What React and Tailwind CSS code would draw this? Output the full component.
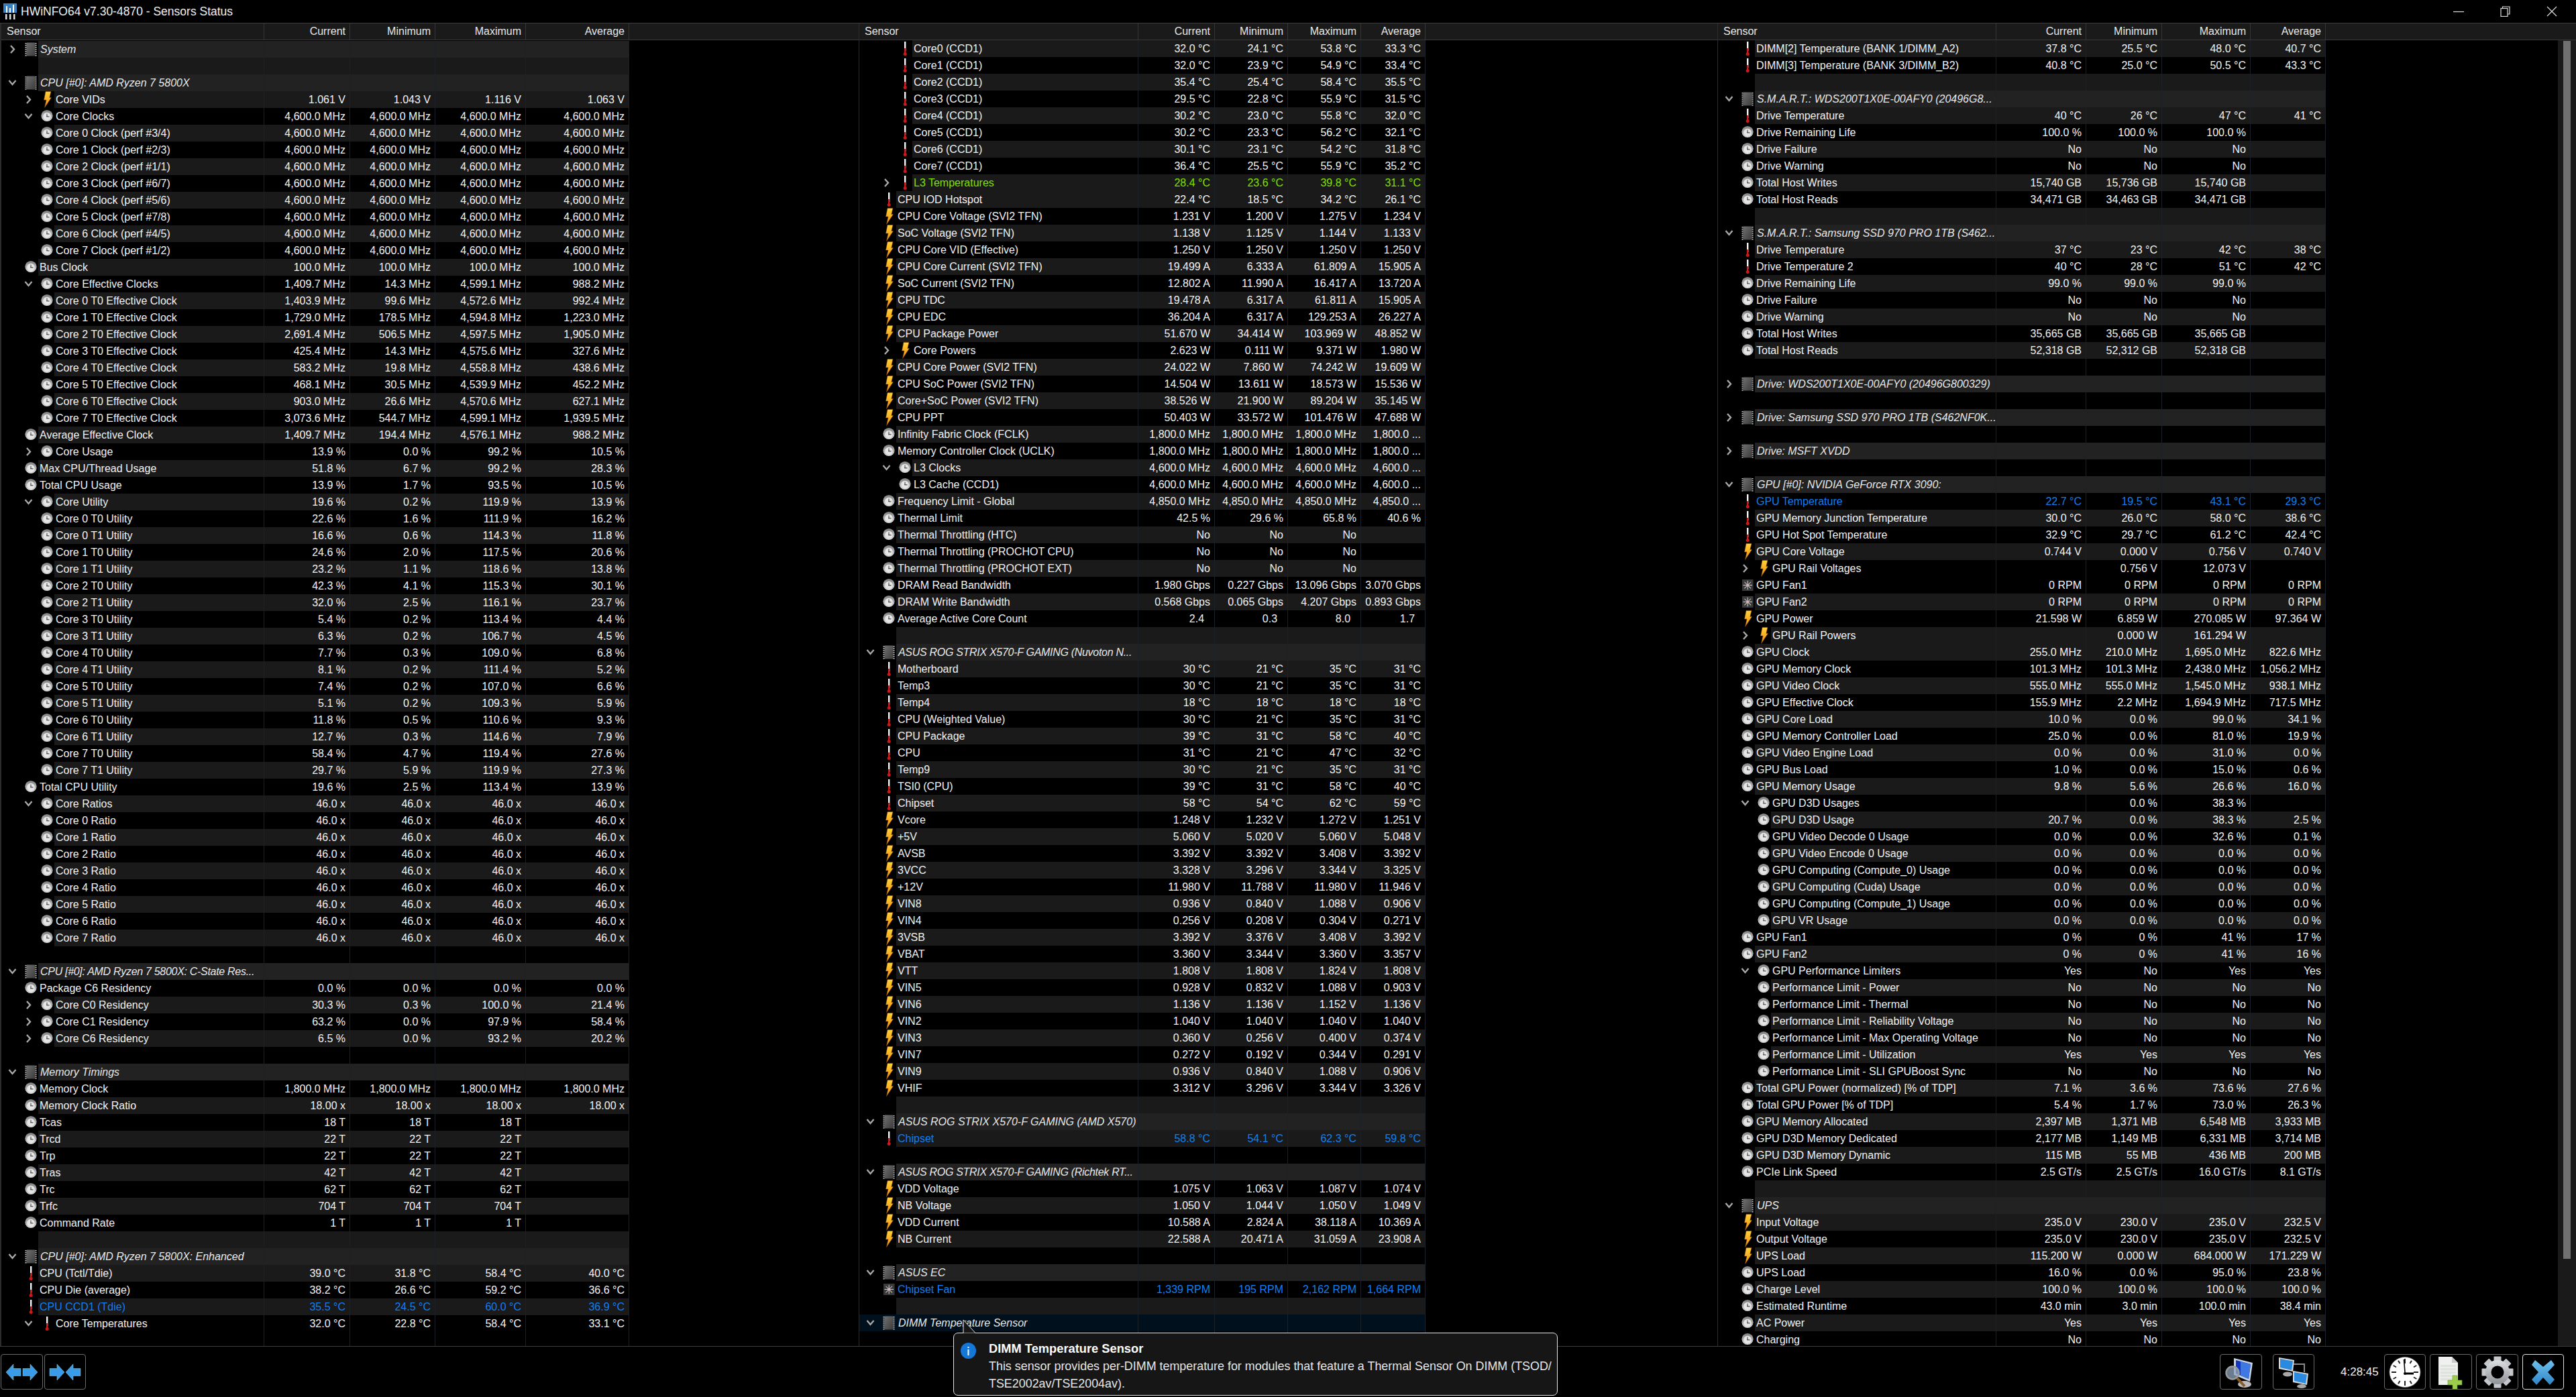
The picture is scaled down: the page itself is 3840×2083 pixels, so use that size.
import React from 'react';

const u = (unit, ...vals) => vals.map((v) => (v === '' ? '' : `${v} ${unit}`));
const BLUE = 'text-[#0f7ff2]';
const GREEN = 'text-[#7fe000]';

const S = (name, chev = 'd', opts = {}) => ({ kind: 'section', name, chev, ...opts });
const B = () => ({ kind: 'blank' });
const R = (icon, lvl, name, vals, opts = {}) => ({ kind: 'row', icon, lvl, name, vals, ...opts });
const all = (v) => [v, v, v, v];
const tri = (v) => [v, v, v, ''];

const coreClockNames = ['#3/4', '#2/3', '#1/1', '#6/7', '#5/6', '#7/8', '#4/5', '#1/2'];
const eff = [
  ['1,403.9', '99.6', '4,572.6', '992.4'],
  ['1,729.0', '178.5', '4,594.8', '1,223.0'],
  ['2,691.4', '506.5', '4,597.5', '1,905.0'],
  ['425.4', '14.3', '4,575.6', '327.6'],
  ['583.2', '19.8', '4,558.8', '438.6'],
  ['468.1', '30.5', '4,539.9', '452.2'],
  ['903.0', '26.6', '4,570.6', '627.1'],
  ['3,073.6', '544.7', '4,599.1', '1,939.5'],
];
const util = [
  ['22.6', '1.6', '111.9', '16.2'], ['16.6', '0.6', '114.3', '11.8'],
  ['24.6', '2.0', '117.5', '20.6'], ['23.2', '1.1', '118.6', '13.8'],
  ['42.3', '4.1', '115.3', '30.1'], ['32.0', '2.5', '116.1', '23.7'],
  ['5.4', '0.2', '113.4', '4.4'], ['6.3', '0.2', '106.7', '4.5'],
  ['7.7', '0.3', '109.0', '6.8'], ['8.1', '0.2', '111.4', '5.2'],
  ['7.4', '0.2', '107.0', '6.6'], ['5.1', '0.2', '109.3', '5.9'],
  ['11.8', '0.5', '110.6', '9.3'], ['12.7', '0.3', '114.6', '7.9'],
  ['58.4', '4.7', '119.4', '27.6'], ['29.7', '5.9', '119.9', '27.3'],
];

const panel1 = [
  S('System', 'r'),
  B(),
  S('CPU [#0]: AMD Ryzen 7 5800X'),
  R('bolt', 1, 'Core VIDs', u('V', '1.061', '1.043', '1.116', '1.063'), { chev: 'r' }),
  R('clock', 1, 'Core Clocks', u('MHz', ...all('4,600.0')), { chev: 'd' }),
  ...coreClockNames.map((p, i) => R('clock', 1, `Core ${i} Clock (perf ${p})`, u('MHz', ...all('4,600.0')))),
  R('clock', 0, 'Bus Clock', u('MHz', ...all('100.0'))),
  R('clock', 1, 'Core Effective Clocks', u('MHz', '1,409.7', '14.3', '4,599.1', '988.2'), { chev: 'd' }),
  ...eff.map((v, i) => R('clock', 1, `Core ${i} T0 Effective Clock`, u('MHz', ...v))),
  R('clock', 0, 'Average Effective Clock', u('MHz', '1,409.7', '194.4', '4,576.1', '988.2')),
  R('clock', 1, 'Core Usage', u('%', '13.9', '0.0', '99.2', '10.5'), { chev: 'r' }),
  R('clock', 0, 'Max CPU/Thread Usage', u('%', '51.8', '6.7', '99.2', '28.3')),
  R('clock', 0, 'Total CPU Usage', u('%', '13.9', '1.7', '93.5', '10.5')),
  R('clock', 1, 'Core Utility', u('%', '19.6', '0.2', '119.9', '13.9'), { chev: 'd' }),
  ...util.map((v, i) => R('clock', 1, `Core ${Math.floor(i / 2)} T${i % 2} Utility`, u('%', ...v))),
  R('clock', 0, 'Total CPU Utility', u('%', '19.6', '2.5', '113.4', '13.9')),
  R('clock', 1, 'Core Ratios', u('x', ...all('46.0')), { chev: 'd' }),
  ...[0, 1, 2, 3, 4, 5, 6, 7].map((i) => R('clock', 1, `Core ${i} Ratio`, u('x', ...all('46.0')))),
  B(),
  S('CPU [#0]: AMD Ryzen 7 5800X: C-State Res...', 'd', { tight: true }),
  R('clock', 0, 'Package C6 Residency', u('%', ...all('0.0'))),
  R('clock', 1, 'Core C0 Residency', u('%', '30.3', '0.3', '100.0', '21.4'), { chev: 'r' }),
  R('clock', 1, 'Core C1 Residency', u('%', '63.2', '0.0', '97.9', '58.4'), { chev: 'r' }),
  R('clock', 1, 'Core C6 Residency', u('%', '6.5', '0.0', '93.2', '20.2'), { chev: 'r' }),
  B(),
  S('Memory Timings'),
  R('clock', 0, 'Memory Clock', u('MHz', ...all('1,800.0'))),
  R('clock', 0, 'Memory Clock Ratio', u('x', ...all('18.00'))),
  R('clock', 0, 'Tcas', u('T', ...tri('18'))),
  R('clock', 0, 'Trcd', u('T', ...tri('22'))),
  R('clock', 0, 'Trp', u('T', ...tri('22'))),
  R('clock', 0, 'Tras', u('T', ...tri('42'))),
  R('clock', 0, 'Trc', u('T', ...tri('62'))),
  R('clock', 0, 'Trfc', u('T', ...tri('704'))),
  R('clock', 0, 'Command Rate', u('T', ...tri('1'))),
  B(),
  S('CPU [#0]: AMD Ryzen 7 5800X: Enhanced'),
  R('therm', 0, 'CPU (Tctl/Tdie)', u('°C', '39.0', '31.8', '58.4', '40.0')),
  R('therm', 0, 'CPU Die (average)', u('°C', '38.2', '26.6', '59.2', '36.6')),
  R('therm', 0, 'CPU CCD1 (Tdie)', u('°C', '35.5', '24.5', '60.0', '36.9'), { color: BLUE }),
  R('therm', 1, 'Core Temperatures', u('°C', '32.0', '22.8', '58.4', '33.1'), { chev: 'd' }),
];

const coreTemps = [
  ['32.0', '24.1', '53.8', '33.3'], ['32.0', '23.9', '54.9', '33.4'],
  ['35.4', '25.4', '58.4', '35.5'], ['29.5', '22.8', '55.9', '31.5'],
  ['30.2', '23.0', '55.8', '32.0'], ['30.2', '23.3', '56.2', '32.1'],
  ['30.1', '23.1', '54.2', '31.8'], ['36.4', '25.5', '55.9', '35.2'],
];
const dots = (v) => [`${v} MHz`, `${v} MHz`, `${v} MHz`, `${v} ...`];
const therm0 = (name, ...v) => R('therm', 0, name, u('°C', ...v));
const bolt0 = (name, unit, ...v) => R('bolt', 0, name, u(unit, ...v));
const clock0 = (name, unit, ...v) => R('clock', 0, name, u(unit, ...v));

const panel2 = [
  ...coreTemps.map((v, i) => R('therm', 1, `Core${i} (CCD1)`, u('°C', ...v))),
  R('therm', 1, 'L3 Temperatures', u('°C', '28.4', '23.6', '39.8', '31.1'), { chev: 'r', color: GREEN, flip: true }),
  therm0('CPU IOD Hotspot', '22.4', '18.5', '34.2', '26.1'),
  bolt0('CPU Core Voltage (SVI2 TFN)', 'V', '1.231', '1.200', '1.275', '1.234'),
  bolt0('SoC Voltage (SVI2 TFN)', 'V', '1.138', '1.125', '1.144', '1.133'),
  bolt0('CPU Core VID (Effective)', 'V', '1.250', '1.250', '1.250', '1.250'),
  bolt0('CPU Core Current (SVI2 TFN)', 'A', '19.499', '6.333', '61.809', '15.905'),
  bolt0('SoC Current (SVI2 TFN)', 'A', '12.802', '11.990', '16.417', '13.720'),
  bolt0('CPU TDC', 'A', '19.478', '6.317', '61.811', '15.905'),
  bolt0('CPU EDC', 'A', '36.204', '6.317', '129.253', '26.227'),
  bolt0('CPU Package Power', 'W', '51.670', '34.414', '103.969', '48.852'),
  R('bolt', 1, 'Core Powers', u('W', '2.623', '0.111', '9.371', '1.980'), { chev: 'r' }),
  bolt0('CPU Core Power (SVI2 TFN)', 'W', '24.022', '7.860', '74.242', '19.609'),
  bolt0('CPU SoC Power (SVI2 TFN)', 'W', '14.504', '13.611', '18.573', '15.536'),
  bolt0('Core+SoC Power (SVI2 TFN)', 'W', '38.526', '21.900', '89.204', '35.145'),
  bolt0('CPU PPT', 'W', '50.403', '33.572', '101.476', '47.688'),
  R('clock', 0, 'Infinity Fabric Clock (FCLK)', dots('1,800.0')),
  R('clock', 0, 'Memory Controller Clock (UCLK)', dots('1,800.0')),
  R('clock', 1, 'L3 Clocks', dots('4,600.0'), { chev: 'd' }),
  R('clock', 1, 'L3 Cache (CCD1)', dots('4,600.0')),
  R('clock', 0, 'Frequency Limit - Global', dots('4,850.0')),
  clock0('Thermal Limit', '%', '42.5', '29.6', '65.8', '40.6'),
  R('clock', 0, 'Thermal Throttling (HTC)', tri('No')),
  R('clock', 0, 'Thermal Throttling (PROCHOT CPU)', tri('No')),
  R('clock', 0, 'Thermal Throttling (PROCHOT EXT)', tri('No')),
  clock0('DRAM Read Bandwidth', 'Gbps', '1.980', '0.227', '13.096', '3.070'),
  clock0('DRAM Write Bandwidth', 'Gbps', '0.568', '0.065', '4.207', '0.893'),
  R('clock', 0, 'Average Active Core Count', ['2.4\u00a0\u00a0', '0.3\u00a0\u00a0', '8.0\u00a0\u00a0', '1.7\u00a0\u00a0']),
  B(),
  S('ASUS ROG STRIX X570-F GAMING (Nuvoton N...', 'd', { tight: true }),
  therm0('Motherboard', '30', '21', '35', '31'),
  therm0('Temp3', '30', '21', '35', '31'),
  therm0('Temp4', '18', '18', '18', '18'),
  therm0('CPU (Weighted Value)', '30', '21', '35', '31'),
  therm0('CPU Package', '39', '31', '58', '40'),
  therm0('CPU', '31', '21', '47', '32'),
  therm0('Temp9', '30', '21', '35', '31'),
  therm0('TSI0 (CPU)', '39', '31', '58', '40'),
  therm0('Chipset', '58', '54', '62', '59'),
  bolt0('Vcore', 'V', '1.248', '1.232', '1.272', '1.251'),
  bolt0('+5V', 'V', '5.060', '5.020', '5.060', '5.048'),
  bolt0('AVSB', 'V', '3.392', '3.392', '3.408', '3.392'),
  bolt0('3VCC', 'V', '3.328', '3.296', '3.344', '3.325'),
  bolt0('+12V', 'V', '11.980', '11.788', '11.980', '11.946'),
  bolt0('VIN8', 'V', '0.936', '0.840', '1.088', '0.906'),
  bolt0('VIN4', 'V', '0.256', '0.208', '0.304', '0.271'),
  bolt0('3VSB', 'V', '3.392', '3.376', '3.408', '3.392'),
  bolt0('VBAT', 'V', '3.360', '3.344', '3.360', '3.357'),
  bolt0('VTT', 'V', '1.808', '1.808', '1.824', '1.808'),
  bolt0('VIN5', 'V', '0.928', '0.832', '1.088', '0.903'),
  bolt0('VIN6', 'V', '1.136', '1.136', '1.152', '1.136'),
  bolt0('VIN2', 'V', '1.040', '1.040', '1.040', '1.040'),
  bolt0('VIN3', 'V', '0.360', '0.256', '0.400', '0.374'),
  bolt0('VIN7', 'V', '0.272', '0.192', '0.344', '0.291'),
  bolt0('VIN9', 'V', '0.936', '0.840', '1.088', '0.906'),
  bolt0('VHIF', 'V', '3.312', '3.296', '3.344', '3.326'),
  B(),
  S('ASUS ROG STRIX X570-F GAMING (AMD X570)'),
  R('therm', 0, 'Chipset', u('°C', '58.8', '54.1', '62.3', '59.8'), { color: BLUE }),
  B(),
  S('ASUS ROG STRIX X570-F GAMING (Richtek RT...', 'd', { tight: true }),
  bolt0('VDD Voltage', 'V', '1.075', '1.063', '1.087', '1.074'),
  bolt0('NB Voltage', 'V', '1.050', '1.044', '1.050', '1.049'),
  bolt0('VDD Current', 'A', '10.588', '2.824', '38.118', '10.369'),
  bolt0('NB Current', 'A', '22.588', '20.471', '31.059', '23.908'),
  B(),
  S('ASUS EC'),
  R('fan', 0, 'Chipset Fan', u('RPM', '1,339', '195', '2,162', '1,664'), { color: BLUE }),
  B(),
  S('DIMM Temperature Sensor', 'd', { selected: true }),
];

const d3d = ['GPU Video Decode 0 Usage', 'GPU Video Encode 0 Usage', 'GPU Computing (Compute_0) Usage', 'GPU Computing (Cuda) Usage', 'GPU Computing (Compute_1) Usage', 'GPU VR Usage'];
const clock1 = (name, unit, ...v) => R('clock', 1, name, u(unit, ...v));

const panel3 = [
  therm0('DIMM[2] Temperature (BANK 1/DIMM_A2)', '37.8', '25.5', '48.0', '40.7'),
  therm0('DIMM[3] Temperature (BANK 3/DIMM_B2)', '40.8', '25.0', '50.5', '43.3'),
  B(),
  S('S.M.A.R.T.: WDS200T1X0E-00AFY0 (20496G8...'),
  therm0('Drive Temperature', '40', '26', '47', '41'),
  R('clock', 0, 'Drive Remaining Life', u('%', ...tri('100.0'))),
  R('clock', 0, 'Drive Failure', tri('No')),
  R('clock', 0, 'Drive Warning', tri('No')),
  R('clock', 0, 'Total Host Writes', u('GB', '15,740', '15,736', '15,740', '')),
  R('clock', 0, 'Total Host Reads', u('GB', '34,471', '34,463', '34,471', '')),
  B(),
  S('S.M.A.R.T.: Samsung SSD 970 PRO 1TB (S462...'),
  therm0('Drive Temperature', '37', '23', '42', '38'),
  therm0('Drive Temperature 2', '40', '28', '51', '42'),
  R('clock', 0, 'Drive Remaining Life', u('%', ...tri('99.0'))),
  R('clock', 0, 'Drive Failure', tri('No')),
  R('clock', 0, 'Drive Warning', tri('No')),
  R('clock', 0, 'Total Host Writes', u('GB', ...tri('35,665'))),
  R('clock', 0, 'Total Host Reads', u('GB', '52,318', '52,312', '52,318', '')),
  B(),
  S('Drive: WDS200T1X0E-00AFY0 (20496G800329)', 'r'),
  B(),
  S('Drive: Samsung SSD 970 PRO 1TB (S462NF0K...', 'r'),
  B(),
  S('Drive: MSFT XVDD', 'r'),
  B(),
  S('GPU [#0]: NVIDIA GeForce RTX 3090:'),
  R('therm', 0, 'GPU Temperature', u('°C', '22.7', '19.5', '43.1', '29.3'), { color: BLUE }),
  therm0('GPU Memory Junction Temperature', '30.0', '26.0', '58.0', '38.6'),
  therm0('GPU Hot Spot Temperature', '32.9', '29.7', '61.2', '42.4'),
  bolt0('GPU Core Voltage', 'V', '0.744', '0.000', '0.756', '0.740'),
  R('bolt', 1, 'GPU Rail Voltages', u('V', '', '0.756', '12.073', ''), { chev: 'r', flip: true }),
  R('fan', 0, 'GPU Fan1', u('RPM', ...all('0'))),
  R('fan', 0, 'GPU Fan2', u('RPM', ...all('0'))),
  bolt0('GPU Power', 'W', '21.598', '6.859', '270.085', '97.364'),
  R('bolt', 1, 'GPU Rail Powers', u('W', '', '0.000', '161.294', ''), { chev: 'r', flip: true }),
  clock0('GPU Clock', 'MHz', '255.0', '210.0', '1,695.0', '822.6'),
  clock0('GPU Memory Clock', 'MHz', '101.3', '101.3', '2,438.0', '1,056.2'),
  clock0('GPU Video Clock', 'MHz', '555.0', '555.0', '1,545.0', '938.1'),
  clock0('GPU Effective Clock', 'MHz', '155.9', '2.2', '1,694.9', '717.5'),
  clock0('GPU Core Load', '%', '10.0', '0.0', '99.0', '34.1'),
  clock0('GPU Memory Controller Load', '%', '25.0', '0.0', '81.0', '19.9'),
  clock0('GPU Video Engine Load', '%', '0.0', '0.0', '31.0', '0.0'),
  clock0('GPU Bus Load', '%', '1.0', '0.0', '15.0', '0.6'),
  clock0('GPU Memory Usage', '%', '9.8', '5.6', '26.6', '16.0'),
  R('clock', 1, 'GPU D3D Usages', u('%', '', '0.0', '38.3', ''), { chev: 'd' }),
  clock1('GPU D3D Usage', '%', '20.7', '0.0', '38.3', '2.5'),
  ...d3d.map((n, i) => clock1(n, '%', '0.0', '0.0', i === 0 ? '32.6' : '0.0', i === 0 ? '0.1' : '0.0')),
  clock0('GPU Fan1', '%', '0', '0', '41', '17'),
  clock0('GPU Fan2', '%', '0', '0', '41', '16'),
  R('clock', 1, 'GPU Performance Limiters', ['Yes', 'No', 'Yes', 'Yes'], { chev: 'd' }),
  R('clock', 1, 'Performance Limit - Power', all('No')),
  R('clock', 1, 'Performance Limit - Thermal', all('No')),
  R('clock', 1, 'Performance Limit - Reliability Voltage', all('No')),
  R('clock', 1, 'Performance Limit - Max Operating Voltage', all('No')),
  R('clock', 1, 'Performance Limit - Utilization', all('Yes')),
  R('clock', 1, 'Performance Limit - SLI GPUBoost Sync', all('No')),
  clock0('Total GPU Power (normalized) [% of TDP]', '%', '7.1', '3.6', '73.6', '27.6'),
  clock0('Total GPU Power [% of TDP]', '%', '5.4', '1.7', '73.0', '26.3'),
  clock0('GPU Memory Allocated', 'MB', '2,397', '1,371', '6,548', '3,933'),
  clock0('GPU D3D Memory Dedicated', 'MB', '2,177', '1,149', '6,331', '3,714'),
  clock0('GPU D3D Memory Dynamic', 'MB', '115', '55', '436', '200'),
  clock0('PCIe Link Speed', 'GT/s', '2.5', '2.5', '16.0', '8.1'),
  B(),
  S('UPS'),
  bolt0('Input Voltage', 'V', '235.0', '230.0', '235.0', '232.5'),
  bolt0('Output Voltage', 'V', '235.0', '230.0', '235.0', '232.5'),
  bolt0('UPS Load', 'W', '115.200', '0.000', '684.000', '171.229'),
  clock0('UPS Load', '%', '16.0', '0.0', '95.0', '23.8'),
  clock0('Charge Level', '%', '100.0', '100.0', '100.0', '100.0'),
  clock0('Estimated Runtime', 'min', '43.0', '3.0', '100.0', '38.4'),
  R('clock', 0, 'AC Power', all('Yes')),
  R('clock', 0, 'Charging', all('No')),
];

/* ---------- small icons ---------- */
function Chevron({ dir }) {
  return dir === 'd' ? (
    <svg width="13" height="25" viewBox="0 0 13 25"><polyline points="1.5,9 6.5,15 11.5,9" fill="none" stroke="#a8a8a8" strokeWidth="2.4" /></svg>
  ) : (
    <svg width="9" height="25" viewBox="0 0 9 25"><polyline points="2,7 7,12.5 2,18" fill="none" stroke="#a8a8a8" strokeWidth="2.4" /></svg>
  );
}
function ClockIcon() {
  return (
    <svg width="18" height="25" viewBox="0 0 18 25">
      <circle cx="9" cy="11.5" r="8.6" fill="url(#rim)" />
      <circle cx="9" cy="12.5" r="5.8" fill="#e6e6e6" />
      <path d="M9 12.5 L9 8.5 M9 12.5 L12.5 13" stroke="#6a6a6a" strokeWidth="1.3" />
      <circle cx="9" cy="12.5" r="1" fill="#555" />
    </svg>
  );
}
function BoltIcon() {
  return (
    <svg width="18" height="25" viewBox="0 0 18 25">
      <path d="M7 0.5 L15 0.5 L12.8 9.5 L15.5 9.5 L5.5 24.5 L8 13 L4.5 13 Z" fill="url(#bolt)" stroke="#8a4b00" strokeWidth="0.5" />
    </svg>
  );
}
function ThermIcon() {
  return (
    <svg width="18" height="25" viewBox="0 0 18 25">
      <rect x="8" y="2" width="2.4" height="14" fill="#f4f4f4" />
      <rect x="8" y="12" width="2.4" height="9" fill="#c81e1e" />
      <circle cx="9.2" cy="20.5" r="2.5" fill="#d01818" />
    </svg>
  );
}
function FanIcon() {
  return (
    <svg width="18" height="25" viewBox="0 0 18 25">
      <rect x="1" y="4" width="16.5" height="17" fill="#3a3a3a" />
      {[0, 45, 90, 135].map((a) => (
        <rect key={a} x="2.5" y="12" width="13.5" height="1" fill="#cfcfcf" transform={`rotate(${a} 9.2 12.5)`} />
      ))}
      <circle cx="9.2" cy="12.5" r="2" fill="#d2b4b4" />
    </svg>
  );
}
function ChipIcon() {
  return (
    <svg width="18" height="25" viewBox="0 0 18 25">
      <rect x="2.5" y="2.5" width="13" height="20" rx="1" fill="url(#chip)" />
      {[3, 6, 9, 12, 15, 18, 21].map((y) => (
        <g key={y}>
          <rect x="0.5" y={y} width="2" height="1.6" fill="#bdbdbd" />
          <rect x="15.5" y={y} width="2" height="1.6" fill="#bdbdbd" />
        </g>
      ))}
    </svg>
  );
}
const ICONS = { clock: ClockIcon, bolt: BoltIcon, therm: ThermIcon, fan: FanIcon, chip: ChipIcon };

function Gutter({ lvl, chev, icon, selected }) {
  const Icon = ICONS[icon];
  const bg = selected ? 'bg-[#00101c]' : 'bg-black';
  if (lvl === 1) {
    return (
      <div className={`flex h-[25px] w-[79px] shrink-0 pl-[33px] ${bg}`}>
        <div className="flex w-[14px] shrink-0 justify-center">{chev && <Chevron dir={chev} />}</div>
        <div className="flex w-[32px] shrink-0 justify-end pr-[2px]">{Icon && <Icon />}</div>
      </div>
    );
  }
  return (
    <div className={`flex h-[25px] w-[55px] shrink-0 ${bg}`}>
      <div className="flex w-[33px] shrink-0 justify-center">{chev && <Chevron dir={chev} />}</div>
      <div className="flex w-[22px] shrink-0 justify-end pr-[2px]">{Icon && <Icon />}</div>
    </div>
  );
}

function Row({ row, stripe, grid }) {
  const line = 'border-r border-[#1b2029]';
  let bg = stripe ? 'bg-[#1a1a1a]' : 'bg-black';
  if (row.kind === 'section') bg = row.selected ? 'bg-[#00101c]' : 'bg-[#222222]';
  const color = row.color || 'text-[#f2f2f2]';
  const vals = row.vals || ['', '', '', ''];
  return (
    <div className={`grid h-[25px] shrink-0 ${grid}`}>
      <div className={`flex min-w-0 ${line}`}>
        {row.kind === 'section' ? (
          <Gutter lvl={0} chev={row.chev} icon="chip" selected={row.selected} />
        ) : row.kind === 'blank' ? (
          <Gutter lvl={0} />
        ) : (
          <Gutter lvl={row.lvl} chev={row.chev} icon={row.icon} />
        )}
        <div
          className={`min-w-0 flex-1 overflow-hidden whitespace-nowrap ${bg} ${
            row.kind === 'section' ? 'pl-[3px] italic text-[#e8e8e8]' : `pl-[2px] ${color}`
          } ${row.tight ? 'tracking-[-0.3px]' : ''}`}
        >
          {row.name}
        </div>
      </div>
      {vals.map((v, i) => (
        <div key={i} className={`overflow-hidden whitespace-nowrap pr-[6px] text-right ${bg} ${line} ${color}`}>
          {v}
        </div>
      ))}
    </div>
  );
}

function Panel({ rows, grid, first, start, scrollbar }) {
  let s = start;
  const items = rows.map((r) => {
    const cur = s;
    s = r.flip ? s : !s;
    return { r, cur };
  });
  const head = 'border-r border-[#353535] pr-[6px] text-right';
  return (
    <div className={`flex h-full min-h-0 min-w-0 flex-col ${first ? 'border-l-2' : 'border-l'} border-[#2c2c2c]`}>
      <div className="h-[25px] shrink-0 border-b border-[#3a3a3a] bg-[#1a1a1a] text-[#e6e6e6]">
        <div className={`grid h-[24px] leading-[24px] ${grid}`}>
          <div className="border-r border-[#353535] pl-[8px]">Sensor</div>
          <div className={head}>Current</div>
          <div className={head}>Minimum</div>
          <div className={head}>Maximum</div>
          <div className={head}>Average</div>
        </div>
      </div>
      <div className={`flex min-h-0 flex-1 ${first ? 'pt-px' : ''}`}>
        <div className="flex min-h-0 min-w-0 flex-1 flex-col overflow-hidden">
          {items.map(({ r, cur }, i) => (
            <Row key={i} row={r} stripe={cur} grid={grid} />
          ))}
          <div className={`grid min-h-0 flex-1 ${grid}`}>
            {[0, 1, 2, 3, 4].map((i) => (
              <div key={i} className="border-r border-[#1b2029]" />
            ))}
          </div>
        </div>
        {scrollbar && (
          <div className="flex w-[27px] shrink-0 flex-col bg-[#1a1a1a] pl-[8px] pr-[8px] pt-px pb-[130px]">
            <div className="w-[11px] flex-1 bg-[#707070]" />
          </div>
        )}
      </div>
    </div>
  );
}

/* ---------- toolbar pictures ---------- */
function Btn({ children, w = 'w-[63px]', bright }) {
  return (
    <div className={`flex h-[53px] ${w} shrink-0 items-center justify-center rounded-[4px] border ${bright ? 'border-[#e0e0e0]' : 'border-[#6a6a6a]'} bg-black`}>
      {children}
    </div>
  );
}
const ARROW_L = 'M1 13 L12 1 L12 7.5 L23 7.5 L23 18.5 L12 18.5 L12 25 Z';
const ARROW_R = 'M23 13 L12 1 L12 7.5 L1 7.5 L1 18.5 L12 18.5 L12 25 Z';
function ExpandIcon() {
  return (
    <svg width="50" height="26" viewBox="0 0 50 26">
      <path d={ARROW_L} fill="#3a9ce8" stroke="#9cc" strokeWidth="0.5" />
      <g transform="translate(25 0)"><path d={ARROW_R} fill="#3a9ce8" stroke="#9cc" strokeWidth="0.5" /></g>
    </svg>
  );
}
function CollapseIcon() {
  return (
    <svg width="48" height="26" viewBox="0 0 48 26">
      <path d={ARROW_R} fill="#3a9ce8" stroke="#9cc" strokeWidth="0.5" />
      <g transform="translate(24 0)"><path d={ARROW_L} fill="#3a9ce8" stroke="#9cc" strokeWidth="0.5" /></g>
    </svg>
  );
}
function SearchMonitor() {
  return (
    <svg width="50" height="48" viewBox="0 0 50 48">
      <path d="M14 3 L42 10 L38 38 L14 28 Z" fill="#c9d3e0" />
      <path d="M17 6 L39 12 L36 34 L17 26 Z" fill="#1236c6" />
      <path d="M24 8 L39 12 L36 34 L24 29 Z" fill="#3e78e0" />
      <ellipse cx="30" cy="42" rx="10" ry="5" fill="#bbb" />
      <circle cx="12" cy="25" r="9.5" fill="#8fa6bf" fillOpacity="0.75" stroke="#9a9a9a" strokeWidth="2.5" />
      <path d="M19 33 L30 45" stroke="#8a5a2a" strokeWidth="4" />
    </svg>
  );
}
function NetworkIcon() {
  return (
    <svg width="50" height="48" viewBox="0 0 50 48">
      <path d="M25 12 H41 V24" fill="none" stroke="#8a8a8a" strokeWidth="2" />
      <g>
        <path d="M3 2 L26 6 L24 23 L3 19 Z" fill="#d8d8d8" />
        <path d="M5 4 L24 7.5 L22 21 L5 17 Z" fill="#2a8ae0" />
        <ellipse cx="16" cy="27" rx="7" ry="3.5" fill="#a8a8a8" />
      </g>
      <g transform="translate(21 20)">
        <path d="M3 2 L26 6 L24 23 L3 19 Z" fill="#d8d8d8" />
        <path d="M5 4 L24 7.5 L22 21 L5 17 Z" fill="#2a8ae0" />
        <ellipse cx="16" cy="25" rx="7" ry="3" fill="#a8a8a8" />
      </g>
    </svg>
  );
}
function ClockBig() {
  const ticks = [0, 30, 60, 90, 120, 150, 180, 210, 240, 270, 300, 330];
  return (
    <svg width="48" height="46" viewBox="0 0 48 46">
      <ellipse cx="24" cy="23" rx="23" ry="22.5" fill="#fff" stroke="#888" strokeWidth="0.6" />
      {ticks.map((a) => (
        <rect key={a} x="23" y="3" width="2" height={a % 90 === 0 ? 7 : 5} fill="#222" transform={`rotate(${a} 24 23)`} />
      ))}
      <path d="M24 23 L22.5 4" stroke="#000" strokeWidth="1.6" />
      <path d="M24 25 L37 25" stroke="#000" strokeWidth="3" />
      <circle cx="24" cy="25" r="2" fill="#000" />
    </svg>
  );
}
function DocPlus() {
  const lines = [14, 19, 24, 29, 34];
  return (
    <svg width="50" height="50" viewBox="0 0 50 50">
      <path d="M6 2 H26 L35 11 V44 H6 Z" fill="#f0f0f0" />
      <path d="M26 2 V11 H35 Z" fill="#c8c8c8" />
      {lines.map((y) => (
        <rect key={y} x="9" y={y} width="23" height="3.5" fill="#dfe3dd" />
      ))}
      <path d="M27 30 H34 V37 H41 V44 H34 V51 H27 V44 H20 V37 H27 Z" fill="#9ccc4c" stroke="#6a9a2c" strokeWidth="0.6" />
    </svg>
  );
}
function GearIcon() {
  return (
    <svg width="48" height="48" viewBox="0 0 48 48">
      {[0, 45, 90, 135, 180, 225, 270, 315].map((a) => (
        <rect key={a} x="18.5" y="0.5" width="11" height="11" rx="1" fill="#c4c8cc" transform={`rotate(${a} 24 24)`} />
      ))}
      <circle cx="24" cy="24" r="18" fill="url(#gear)" />
      <circle cx="24" cy="24" r="9.5" fill="#000" />
    </svg>
  );
}
function CloseIcon() {
  return (
    <svg width="36" height="40" viewBox="0 0 36 40">
      <path d="M6 2 L18 12 L30 2 L35 9 L25 20 L35 31 L28 39 L18 28 L8 39 L1 31 L11 20 L1 9 Z" fill="url(#cross)" />
    </svg>
  );
}

export default function App() {
  return (
    <div className="relative flex h-[2083px] w-[3840px] flex-col overflow-hidden bg-black text-[16px] leading-[25px] text-[#f2f2f2] [font-family:'Liberation_Sans',Arial,sans-serif]">
      <svg className="h-0 w-0 shrink-0">
        <defs>
          <linearGradient id="rim" x1="0" y1="0" x2="0" y2="1">
            <stop offset="0" stopColor="#7e7e7e" />
            <stop offset="1" stopColor="#dcdcdc" />
          </linearGradient>
          <linearGradient id="bolt" x1="0" y1="0" x2="0" y2="1">
            <stop offset="0" stopColor="#ffd23a" />
            <stop offset="1" stopColor="#ef8a10" />
          </linearGradient>
          <linearGradient id="chip" x1="0" y1="0" x2="1" y2="1">
            <stop offset="0" stopColor="#6e6e6e" />
            <stop offset="1" stopColor="#3c3c3c" />
          </linearGradient>
          <linearGradient id="gear" x1="0" y1="0" x2="0" y2="1">
            <stop offset="0" stopColor="#dde0e3" />
            <stop offset="1" stopColor="#8e9296" />
          </linearGradient>
          <linearGradient id="cross" x1="0" y1="0" x2="0" y2="1">
            <stop offset="0" stopColor="#6fc0ec" />
            <stop offset="1" stopColor="#2f86c8" />
          </linearGradient>
        </defs>
      </svg>

      {/* title bar */}
      <div className="flex h-[34px] shrink-0 items-center pl-[4px] pr-[28px]">
        <svg width="22" height="26" viewBox="0 0 22 26" className="shrink-0">
          <rect x="1" y="1" width="20" height="14" fill="#3a7fc0" />
          <rect x="5" y="5" width="2" height="10" fill="#fff" />
          <rect x="10" y="8" width="2" height="7" fill="#fff" />
          <rect x="15" y="3" width="2" height="12" fill="#fff" />
          <rect x="4" y="17" width="2.5" height="8" fill="#ddd" />
          <rect x="10" y="17" width="2.5" height="8" fill="#ddd" />
          <rect x="16" y="17" width="2.5" height="8" fill="#ddd" />
        </svg>
        <div className="ml-[5px] whitespace-nowrap text-[17.5px] leading-[34px] text-[#f0f0f0]">HWiNFO64 v7.30-4870 - Sensors Status</div>
        <div className="ml-auto flex items-center gap-[54px]">
          <svg width="16" height="16" viewBox="0 0 16 16"><path d="M0 8.5 H16" stroke="#ddd" strokeWidth="1.2" /></svg>
          <svg width="15" height="16" viewBox="0 0 15 16" fill="none" stroke="#ddd" strokeWidth="1.2"><rect x="1" y="3.5" width="10" height="12" /><path d="M3.5 3.5 V1 H14 V12 H11" /></svg>
          <svg width="16" height="16" viewBox="0 0 16 16"><path d="M1 1 L15 15 M15 1 L1 15" stroke="#ddd" strokeWidth="1.2" /></svg>
        </div>
      </div>

      {/* sensor panes */}
      <div className="grid min-h-0 flex-1 grid-cols-3 border-y border-[#3c3c3c]">
        <Panel rows={panel1} grid="grid-cols-[392px_128px_127px_135px_154px]" first start={false} />
        <Panel rows={panel2} grid="grid-cols-[416px_114px_109px_109px_96px]" start={true} />
        <Panel rows={panel3} grid="grid-cols-[415px_134px_113px_132px_112px]" start={true} scrollbar />
      </div>

      {/* bottom toolbar */}
      <div className="flex h-[75px] shrink-0 items-start pl-[1px] pr-[18px] pt-[11px]">
        <div className="flex gap-[2px]">
          <Btn><ExpandIcon /></Btn>
          <Btn w="w-[62px]"><CollapseIcon /></Btn>
        </div>
        <div className="ml-auto flex items-center">
          <div className="flex gap-[16px]">
            <Btn><SearchMonitor /></Btn>
            <Btn w="w-[62px]"><NetworkIcon /></Btn>
          </div>
          <div className="ml-[39px] w-[65px] whitespace-nowrap text-[17px] text-[#f0f0f0]">4:28:45</div>
          <div className="flex gap-[6px]">
            <Btn w="w-[62px]"><ClockBig /></Btn>
            <Btn><DocPlus /></Btn>
            <Btn><GearIcon /></Btn>
            <Btn w="w-[62px]" bright><CloseIcon /></Btn>
          </div>
        </div>
      </div>

      {/* balloon tooltip */}
      <div className="absolute left-[1421px] top-[1987px] h-[94px] w-[901px] rounded-[7px] border border-[#e8e8e8] bg-[#161616] pl-[52px] pt-[10px] text-[#e6e6e6]">
        <svg width="23" height="24" viewBox="0 0 23 24" className="absolute left-[10px] top-[14px]">
          <ellipse cx="11.5" cy="12" rx="11.5" ry="12" fill="#1478d8" />
          <rect x="10.5" y="10" width="2" height="9" fill="#fff" />
          <rect x="10.5" y="6" width="2" height="2" fill="#fff" />
        </svg>
        <div className="text-[18.3px] font-bold leading-[26px] text-white">DIMM Temperature Sensor</div>
        <div className="whitespace-nowrap text-[17.9px] leading-[26px]">This sensor provides per-DIMM temperature for modules that feature a Thermal Sensor On DIMM (TSOD/</div>
        <div className="whitespace-nowrap text-[17.9px] leading-[26px]">TSE2002av/TSE2004av).</div>
      </div>
      <svg width="20" height="21" viewBox="0 0 20 21" className="absolute left-[1435px] top-[1967px]">
        <path d="M1 1 L1 20.5 L19 20.5 Z" fill="#161616" />
        <path d="M1 21 L1 1 L19 20.5" fill="none" stroke="#e8e8e8" strokeWidth="1" />
      </svg>
    </div>
  );
}
